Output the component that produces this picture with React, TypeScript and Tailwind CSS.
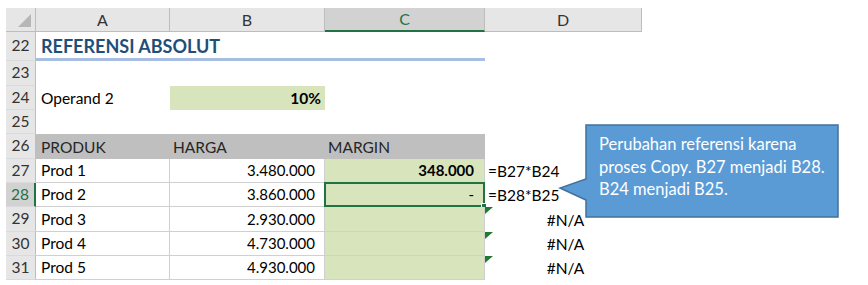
import React from "react";

type Row = {
  n: number;
  h: string;
  a?: React.ReactNode;
  b?: React.ReactNode;
  c?: React.ReactNode;
  d?: React.ReactNode;
  kind?: "title" | "head" | "data" | "plain";
  active?: boolean;
  err?: boolean;
};

const products: [string, string, string, string][] = [
  ["Prod 1", "3.480.000", "348.000", "=B27*B24"],
  ["Prod 2", "3.860.000", "-", "=B28*B25"],
  ["Prod 3", "2.930.000", "", "#N/A"],
  ["Prod 4", "4.730.000", "", "#N/A"],
  ["Prod 5", "4.930.000", "", "#N/A"],
];

const heights = ["h-[25px]", "h-[24px]", "h-[24px]", "h-[25px]", "h-[24px]", "h-[24px]", "h-[25px]", "h-[24px]", "h-[24px]"];

function ColHeader({ w, label, selected }: { w: string; label: string; selected?: boolean }) {
  return (
    <div
      className={`${w} flex items-center justify-center text-[16px] border-r border-b ${
        selected
          ? "bg-[#d2d2d2] text-[#217346] border-r-[#bdbdbd] border-b-2 border-b-[#217346]"
          : "bg-[#e6e6e6] text-[#333] border-[#bdbdbd]"
      }`}
    >
      {label}
    </div>
  );
}

function RowNum({ n, active }: { n: number; active?: boolean }) {
  return (
    <div
      className={`w-[30px] shrink-0 flex items-center justify-center text-[15.5px] border-b border-b-[#dadada] ${
        active
          ? "bg-[#d2d2d2] text-[#217346] border-r-2 border-r-[#217346]"
          : "bg-[#e6e6e6] text-[#333] border-r border-r-[#bdbdbd]"
      }`}
    >
      {n}
    </div>
  );
}

export default function App() {
  const rows: Row[] = [
    { n: 23, h: heights[0], kind: "plain" },
    { n: 24, h: heights[1], kind: "plain", a: "Operand 2", b: "10%" },
    { n: 25, h: heights[2], kind: "plain" },
    { n: 26, h: heights[3], kind: "head" },
    ...products.map(([a, b, c, d], i) => ({
      n: 27 + i,
      h: heights[4 + i],
      kind: "data" as const,
      a,
      b,
      c,
      d,
      active: i === 1,
      err: i >= 2,
    })),
  ];

  return (
    <div className="relative w-[868px] h-[285px] bg-white overflow-hidden font-[Lato,sans-serif] text-[15.5px] leading-none text-black">
      <div className="pt-[8px] pl-[6px]">
        {/* column letters */}
        <div className="flex h-[24px]">
          <div className="w-[30px] relative bg-[#e6e6e6] border-r border-b border-[#bdbdbd]">
            <svg className="absolute right-[4px] bottom-[4px]" width="13" height="13" viewBox="0 0 13 13">
              <path d="M13 0V13H0Z" fill="#b6b6b6" />
            </svg>
          </div>
          <ColHeader w="w-[134px]" label="A" />
          <ColHeader w="w-[155px]" label="B" />
          <ColHeader w="w-[160px]" label="C" selected />
          <ColHeader w="w-[157px]" label="D" />
        </div>

        {/* row 22 – heading */}
        <div className="flex h-[29px]">
          <RowNum n={22} />
          <div className="w-[449px] flex items-center pl-[5px] pt-[1px] border-b-[3px] border-[#a7bde2] text-[18px] font-bold text-[#1f4e79]">
            REFERENSI ABSOLUT
          </div>
        </div>

        {rows.map((r) => {
          const line = r.kind === "data" ? "border-b border-[#d0d0d0]" : "";
          return (
            <div key={r.n} className={`flex ${r.h}`}>
              <RowNum n={r.n} active={r.active} />
              <div
                className={`w-[134px] flex items-end pb-[4px] pl-[5px] ${line} ${
                  r.kind === "head" ? "bg-[#bfbfbf] text-[#262626]" : ""
                } ${r.kind === "data" ? "border-r border-r-[#cfcfcf]" : ""}`}
              >
                {r.kind === "head" ? "PRODUK" : r.a}
              </div>
              <div
                className={`w-[155px] flex items-end pb-[4px] ${line} ${
                  r.kind === "head"
                    ? "bg-[#bfbfbf] text-[#262626] pl-[3px]"
                    : r.n === 24
                    ? "bg-[#d8e4bc] justify-end pr-[4px] font-bold"
                    : "justify-end pr-[9px]"
                } ${r.kind === "data" ? "border-r border-r-[#cfcfcf] text-[15px]" : ""}`}
              >
                {r.kind === "head" ? "HARGA" : r.b}
              </div>
              <div
                className={`relative w-[160px] flex items-end pb-[4px] ${line} ${
                  r.kind === "head"
                    ? "bg-[#bfbfbf] text-[#262626] pl-[3px]"
                    : r.kind === "data"
                    ? "bg-[#d8e4bc] justify-end pr-[10px] border-r border-r-[#cfcfcf] text-[15px]"
                    : ""
                } ${r.n === 27 ? "font-bold" : ""}`}
              >
                {r.kind === "head" ? "MARGIN" : r.c}
                {r.active && (
                  <div className="absolute -top-[1px] -left-[1px] -right-[1px] -bottom-[1px] border-2 border-[#217346]">
                    <div className="absolute -right-[4px] -bottom-[4px] w-[6px] h-[6px] bg-[#217346] border border-white" />
                  </div>
                )}
              </div>
              <div
                className={`relative w-[157px] flex items-end pb-[4px] ${
                  r.err ? "justify-center pl-[4px]" : "pl-[3px]"
                }`}
              >
                {r.err && (
                  <svg className="absolute left-0 top-0" width="8" height="8" viewBox="0 0 8 8">
                    <path d="M0 0H8L0 7Z" fill="#1e7b34" />
                  </svg>
                )}
                {r.d}
              </div>
            </div>
          );
        })}
      </div>

      {/* comment callout */}
      <svg className="absolute left-[555px] top-[120px]" width="290" height="104" viewBox="0 0 290 104">
        <path d="M31 5H283V97H31V80L5 68L31 59Z" fill="#5b9bd5" stroke="#41719c" strokeWidth="1.5" />
      </svg>
      <div className="absolute left-[599px] top-[133px] w-[238px] text-[16.5px] leading-[22.5px] text-white">
        Perubahan referensi karena
        <br />
        proses Copy. B27 menjadi B28.
        <br />
        B24 menjadi B25.
      </div>
    </div>
  );
}
